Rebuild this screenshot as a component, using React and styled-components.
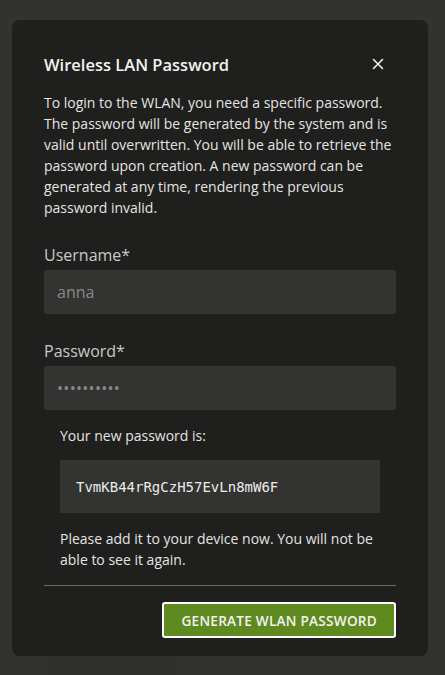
import React from 'react';
import styled, { createGlobalStyle } from 'styled-components';

const GlobalStyle = createGlobalStyle`
  html, body {
    margin: 0;
    padding: 0;
    background: #323231;
    font-family: 'Open Sans', 'Noto Sans', sans-serif;
  }
`;

const Page = styled.div`
  width: 445px;
  height: 675px;
  position: relative;
  overflow: hidden;
  background: #323231;
`;

const BackCard = styled.div`
  position: absolute;
  left: 47px;
  top: 600px;
  width: 128px;
  height: 100px;
  background: #2f2f2e;
`;

const Overlay = styled.div`
  position: absolute;
  inset: 0;
  padding: 20px 17px 0 12px;
`;

const Modal = styled.div`
  background: #1f1f1e;
  border-radius: 8px;
  padding: 32px 32px 18px;
  color: #e4e4e2;
`;

const Header = styled.div`
  display: flex;
  align-items: center;
  justify-content: space-between;
  height: 26px;
  margin-bottom: 14px;
`;

const Title = styled.h2`
  margin: 0 0 2px;
  font-size: 16.5px;
  font-weight: 600;
  color: #f1f1ef;
`;

const CloseButton = styled.button`
  background: none;
  border: none;
  padding: 0;
  width: 24px;
  height: 24px;
  margin-right: 6px;
  margin-bottom: 2px;
  display: flex;
  align-items: center;
  justify-content: center;
  color: #f1f1ef;
  cursor: pointer;
`;

const Text = styled.p`
  margin: 0;
  font-size: 14px;
  line-height: 21px;
  color: #e4e4e2;
`;

const Field = styled.div`
  display: flex;
  flex-direction: column;
  margin-top: ${(p) => p.$top}px;
`;

const Label = styled.label`
  font-size: 16px;
  line-height: 24px;
  color: #c9c9c7;
  margin-bottom: 3px;
`;

const Input = styled.div`
  height: 44px;
  background: #333332;
  border-radius: 3px;
  display: flex;
  align-items: center;
  padding: 0 13px;
  font-size: 16px;
  color: #8a8a88;
  letter-spacing: ${(p) => (p.$masked ? '0.3px' : '0')};
`;

const Result = styled.div`
  padding: 15px 16px 0;
`;

const CodeBox = styled.div`
  margin: 14px 0 15px;
  width: 320px;
  height: 53px;
  box-sizing: border-box;
  background: #333332;
  display: flex;
  align-items: center;
  padding: 0 16px;
  font-family: 'DejaVu Sans Mono', monospace;
  font-size: 14px;
  color: #ececea;
`;

const Divider = styled.hr`
  border: none;
  border-top: 1px solid #6a6a68;
  margin: 15px 0 16px;
`;

const Footer = styled.div`
  display: flex;
  justify-content: flex-end;
`;

const PrimaryButton = styled.button`
  background: #5e8a1f;
  border: 2px solid #ffffff;
  border-radius: 3px;
  height: 36px;
  padding: 0 17px;
  font-family: 'Open Sans', sans-serif;
  font-size: 13.6px;
  font-weight: 600;
  color: #f4f4f0;
  letter-spacing: 0.25px;
  cursor: pointer;
`;

export default function App() {
  return (
    <>
      <GlobalStyle />
      <Page>
        <BackCard />
        <Overlay>
          <Modal>
            <Header>
              <Title>Wireless LAN Password</Title>
              <CloseButton aria-label="Close">
                <svg width="12" height="12" viewBox="0 0 12 12">
                  <path d="M1.5 1.5 L10.5 10.5 M10.5 1.5 L1.5 10.5" stroke="currentColor" strokeWidth="1.6" strokeLinecap="round" />
                </svg>
              </CloseButton>
            </Header>
            <Text>
              To login to the WLAN, you need a specific password. The password will be generated by the system and is valid until overwritten. You will be able to retrieve the password upon creation. A new password can be generated at any time, rendering the previous password invalid.
            </Text>
            <Field $top={25}>
              <Label>Username*</Label>
              <Input>anna</Input>
            </Field>
            <Field $top={25}>
              <Label>Password*</Label>
              <Input $masked>••••••••••</Input>
            </Field>
            <Result>
              <Text>Your new password is:</Text>
              <CodeBox>TvmKB44rRgCzH57EvLn8mW6F</CodeBox>
              <Text>Please add it to your device now. You will not be able to see it again.</Text>
            </Result>
            <Divider />
            <Footer>
              <PrimaryButton>GENERATE WLAN PASSWORD</PrimaryButton>
            </Footer>
          </Modal>
        </Overlay>
      </Page>
    </>
  );
}
